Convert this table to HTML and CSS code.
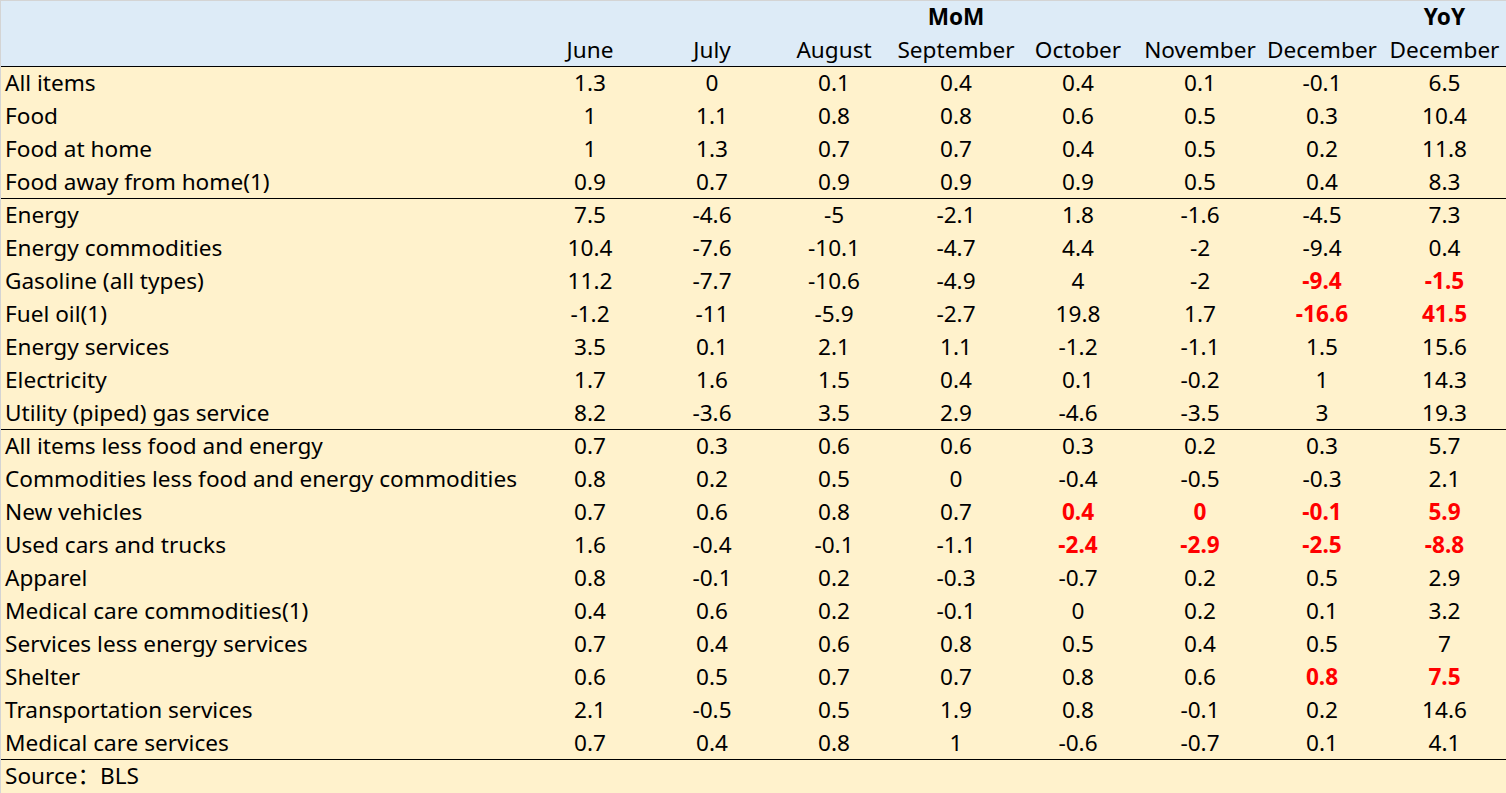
FILE: index.html
```html
<!DOCTYPE html>
<html lang="en">
<head>
<meta charset="utf-8">
<title>CPI table</title>
<link rel="stylesheet" href="styles.css">
</head>
<body>
<div class="sheet">
  <div class="row head top">
    <div class="cell label"></div>
    <div class="cell span7 bold">MoM</div>
    <div class="cell bold">YoY</div>
  </div>
  <div class="row head sep">
    <div class="cell label"></div>
    <div class="cell">June</div>
    <div class="cell">July</div>
    <div class="cell">August</div>
    <div class="cell">September</div>
    <div class="cell">October</div>
    <div class="cell">November</div>
    <div class="cell">December</div>
    <div class="cell">December</div>
  </div>

  <div class="row"><div class="cell label">All items</div><div class="cell">1.3</div><div class="cell">0</div><div class="cell">0.1</div><div class="cell">0.4</div><div class="cell">0.4</div><div class="cell">0.1</div><div class="cell">-0.1</div><div class="cell">6.5</div></div>
  <div class="row"><div class="cell label">Food</div><div class="cell">1</div><div class="cell">1.1</div><div class="cell">0.8</div><div class="cell">0.8</div><div class="cell">0.6</div><div class="cell">0.5</div><div class="cell">0.3</div><div class="cell">10.4</div></div>
  <div class="row"><div class="cell label">Food at home</div><div class="cell">1</div><div class="cell">1.3</div><div class="cell">0.7</div><div class="cell">0.7</div><div class="cell">0.4</div><div class="cell">0.5</div><div class="cell">0.2</div><div class="cell">11.8</div></div>
  <div class="row sep"><div class="cell label">Food away from home(1)</div><div class="cell">0.9</div><div class="cell">0.7</div><div class="cell">0.9</div><div class="cell">0.9</div><div class="cell">0.9</div><div class="cell">0.5</div><div class="cell">0.4</div><div class="cell">8.3</div></div>

  <div class="row"><div class="cell label">Energy</div><div class="cell">7.5</div><div class="cell">-4.6</div><div class="cell">-5</div><div class="cell">-2.1</div><div class="cell">1.8</div><div class="cell">-1.6</div><div class="cell">-4.5</div><div class="cell">7.3</div></div>
  <div class="row"><div class="cell label">Energy commodities</div><div class="cell">10.4</div><div class="cell">-7.6</div><div class="cell">-10.1</div><div class="cell">-4.7</div><div class="cell">4.4</div><div class="cell">-2</div><div class="cell">-9.4</div><div class="cell">0.4</div></div>
  <div class="row"><div class="cell label">Gasoline (all types)</div><div class="cell">11.2</div><div class="cell">-7.7</div><div class="cell">-10.6</div><div class="cell">-4.9</div><div class="cell">4</div><div class="cell">-2</div><div class="cell hl">-9.4</div><div class="cell hl">-1.5</div></div>
  <div class="row"><div class="cell label">Fuel oil(1)</div><div class="cell">-1.2</div><div class="cell">-11</div><div class="cell">-5.9</div><div class="cell">-2.7</div><div class="cell">19.8</div><div class="cell">1.7</div><div class="cell hl">-16.6</div><div class="cell hl">41.5</div></div>
  <div class="row"><div class="cell label">Energy services</div><div class="cell">3.5</div><div class="cell">0.1</div><div class="cell">2.1</div><div class="cell">1.1</div><div class="cell">-1.2</div><div class="cell">-1.1</div><div class="cell">1.5</div><div class="cell">15.6</div></div>
  <div class="row"><div class="cell label">Electricity</div><div class="cell">1.7</div><div class="cell">1.6</div><div class="cell">1.5</div><div class="cell">0.4</div><div class="cell">0.1</div><div class="cell">-0.2</div><div class="cell">1</div><div class="cell">14.3</div></div>
  <div class="row sep"><div class="cell label">Utility (piped) gas service</div><div class="cell">8.2</div><div class="cell">-3.6</div><div class="cell">3.5</div><div class="cell">2.9</div><div class="cell">-4.6</div><div class="cell">-3.5</div><div class="cell">3</div><div class="cell">19.3</div></div>

  <div class="row"><div class="cell label">All items less food and energy</div><div class="cell">0.7</div><div class="cell">0.3</div><div class="cell">0.6</div><div class="cell">0.6</div><div class="cell">0.3</div><div class="cell">0.2</div><div class="cell">0.3</div><div class="cell">5.7</div></div>
  <div class="row"><div class="cell label">Commodities less food and energy commodities</div><div class="cell">0.8</div><div class="cell">0.2</div><div class="cell">0.5</div><div class="cell">0</div><div class="cell">-0.4</div><div class="cell">-0.5</div><div class="cell">-0.3</div><div class="cell">2.1</div></div>
  <div class="row"><div class="cell label">New vehicles</div><div class="cell">0.7</div><div class="cell">0.6</div><div class="cell">0.8</div><div class="cell">0.7</div><div class="cell hl">0.4</div><div class="cell hl">0</div><div class="cell hl">-0.1</div><div class="cell hl">5.9</div></div>
  <div class="row"><div class="cell label">Used cars and trucks</div><div class="cell">1.6</div><div class="cell">-0.4</div><div class="cell">-0.1</div><div class="cell">-1.1</div><div class="cell hl">-2.4</div><div class="cell hl">-2.9</div><div class="cell hl">-2.5</div><div class="cell hl">-8.8</div></div>
  <div class="row"><div class="cell label">Apparel</div><div class="cell">0.8</div><div class="cell">-0.1</div><div class="cell">0.2</div><div class="cell">-0.3</div><div class="cell">-0.7</div><div class="cell">0.2</div><div class="cell">0.5</div><div class="cell">2.9</div></div>
  <div class="row"><div class="cell label">Medical care commodities(1)</div><div class="cell">0.4</div><div class="cell">0.6</div><div class="cell">0.2</div><div class="cell">-0.1</div><div class="cell">0</div><div class="cell">0.2</div><div class="cell">0.1</div><div class="cell">3.2</div></div>
  <div class="row"><div class="cell label">Services less energy services</div><div class="cell">0.7</div><div class="cell">0.4</div><div class="cell">0.6</div><div class="cell">0.8</div><div class="cell">0.5</div><div class="cell">0.4</div><div class="cell">0.5</div><div class="cell">7</div></div>
  <div class="row"><div class="cell label">Shelter</div><div class="cell">0.6</div><div class="cell">0.5</div><div class="cell">0.7</div><div class="cell">0.7</div><div class="cell">0.8</div><div class="cell">0.6</div><div class="cell hl">0.8</div><div class="cell hl">7.5</div></div>
  <div class="row"><div class="cell label">Transportation services</div><div class="cell">2.1</div><div class="cell">-0.5</div><div class="cell">0.5</div><div class="cell">1.9</div><div class="cell">0.8</div><div class="cell">-0.1</div><div class="cell">0.2</div><div class="cell">14.6</div></div>
  <div class="row sep"><div class="cell label">Medical care services</div><div class="cell">0.7</div><div class="cell">0.4</div><div class="cell">0.8</div><div class="cell">1</div><div class="cell">-0.6</div><div class="cell">-0.7</div><div class="cell">0.1</div><div class="cell">4.1</div></div>

  <div class="row"><div class="cell label">Source：BLS</div></div>
</div>
</body>
</html>
```

FILE: styles.css
```css
html, body {
  margin: 0;
  padding: 0;
  background: #fff2cc;
}

.sheet {
  width: 1506px;
  height: 793px;
  box-sizing: border-box;
  border-top: 1px solid #d4d4d4;
  border-left: 1px solid #d4d4d4;
  background: #fff2cc;
  font-family: "Noto Sans", "Noto Sans CJK SC", sans-serif;
  font-size: 22.6px;
  color: #000;
  overflow: hidden;
}

.row {
  display: grid;
  grid-template-columns: 528px repeat(7, 122px) 1fr;
  height: 33px;
  box-sizing: border-box;
}

.row.head {
  background: #ddebf7;
}

.row.sep {
  border-bottom: 1px solid #000;
}

.cell {
  display: flex;
  align-items: center;
  justify-content: center;
  white-space: nowrap;
  line-height: 1;
}

.cell.label {
  justify-content: flex-start;
  padding-left: 4px;
}

.cell.span7 {
  grid-column: span 7;
}

.bold {
  font-weight: 700;
}

.hl {
  color: #ff0000;
  font-weight: 700;
}
```
